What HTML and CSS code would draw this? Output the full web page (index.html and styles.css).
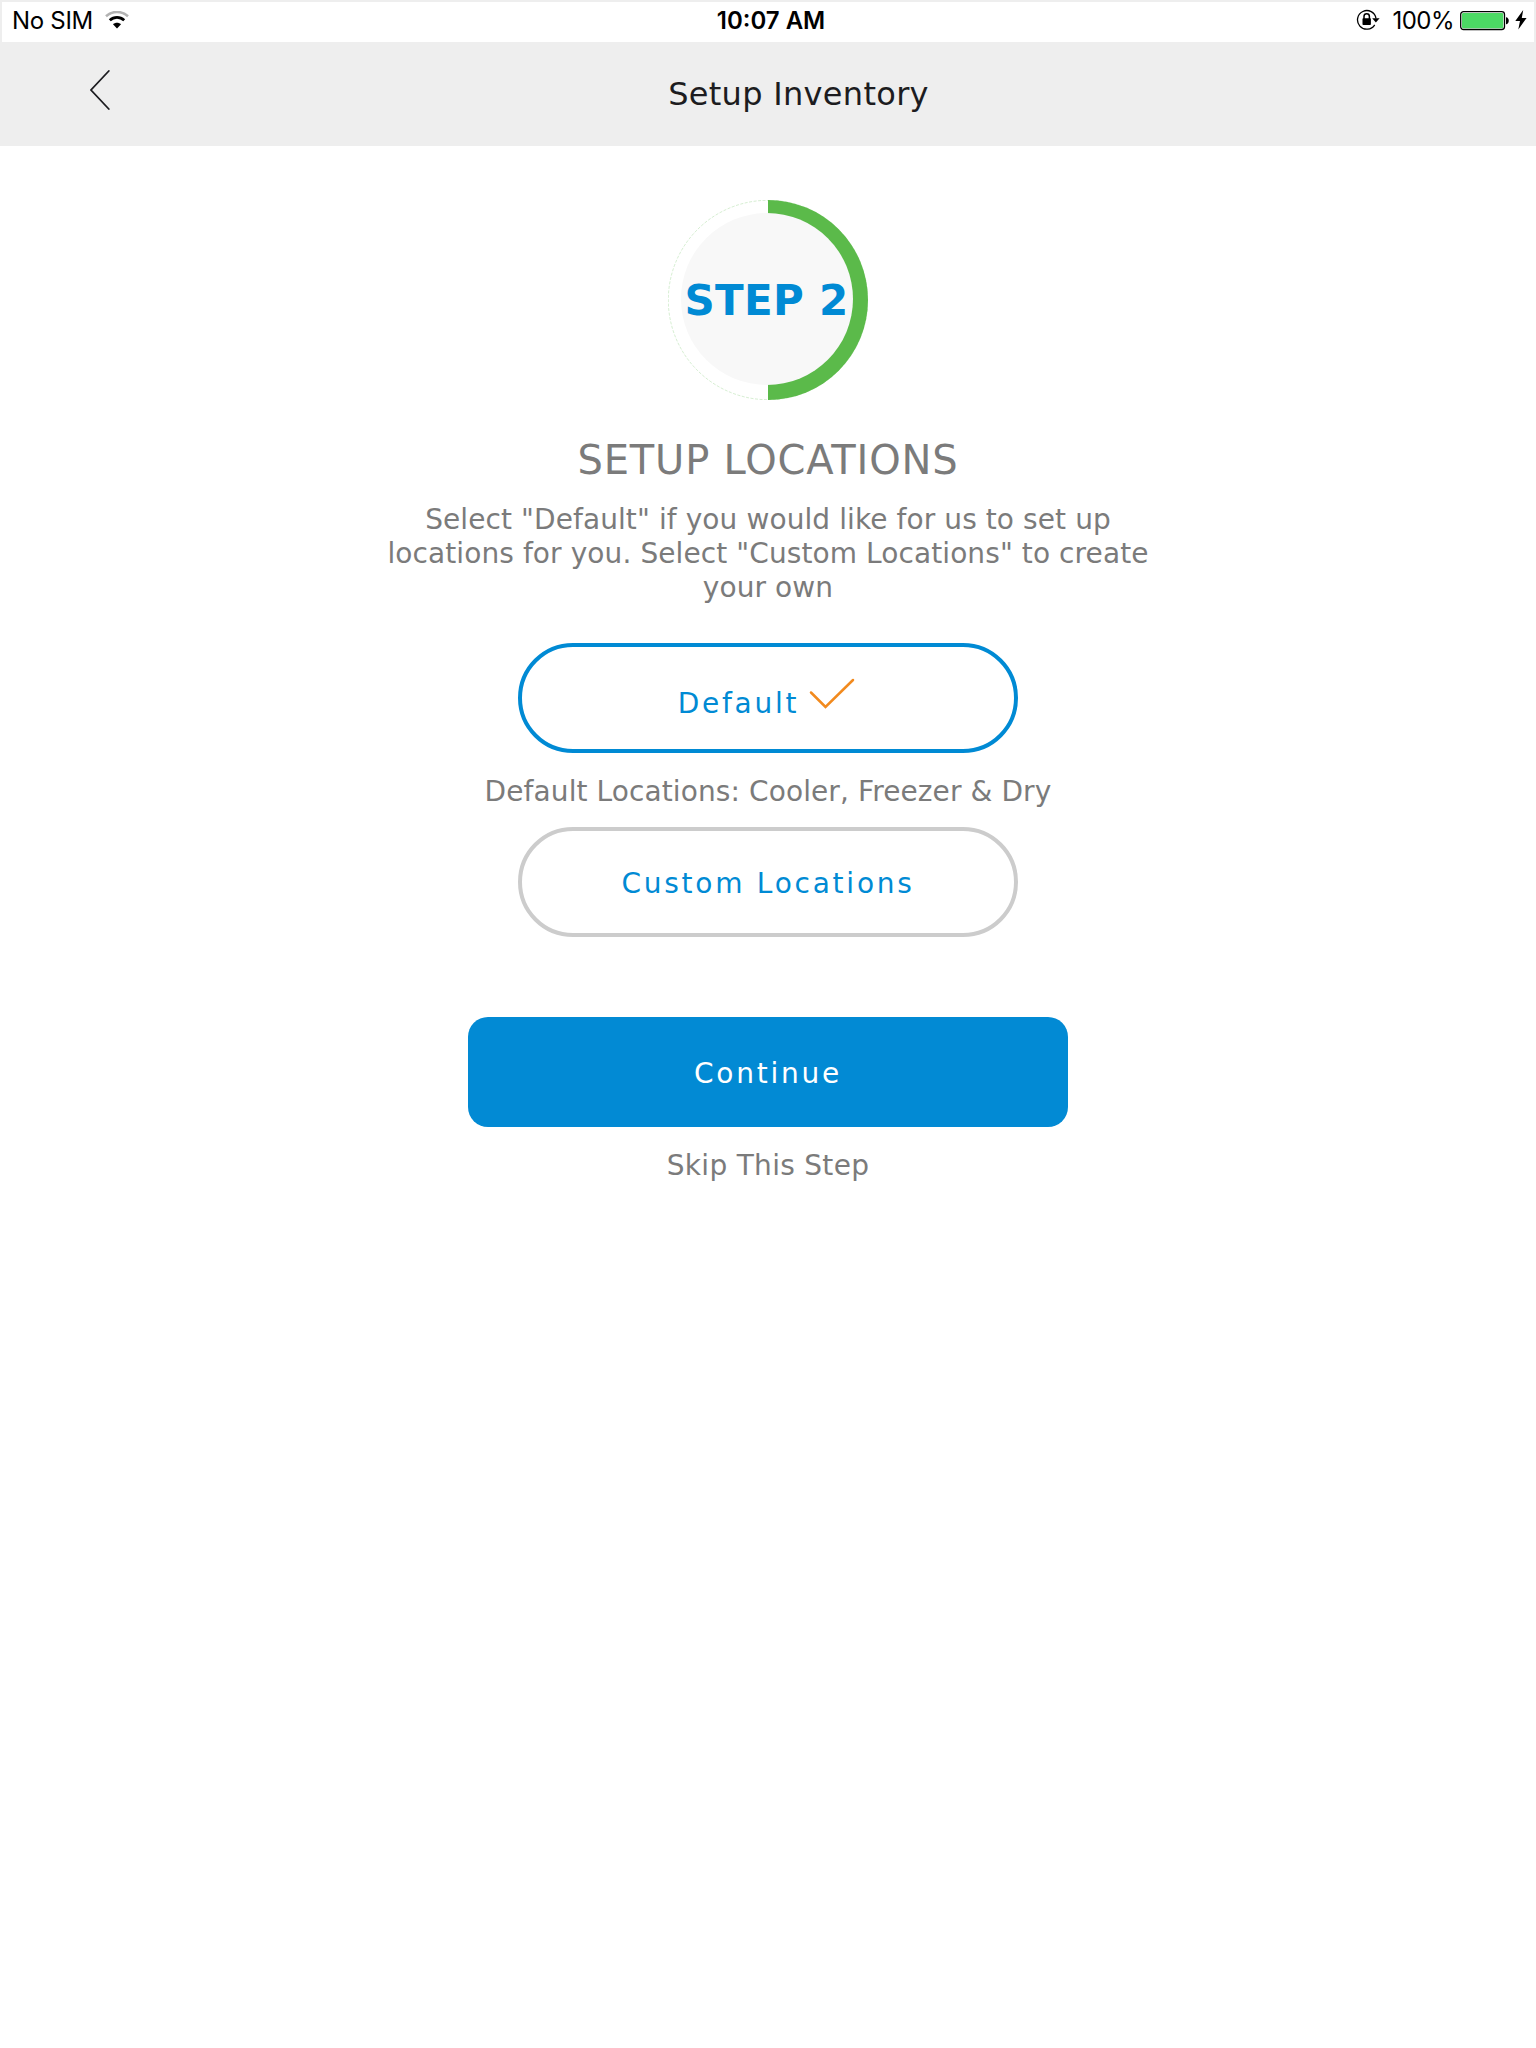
FILE: index.html
```html
<!DOCTYPE html>
<html lang="en">
<head>
<meta charset="utf-8">
<title>Setup Inventory</title>
<link rel="stylesheet" href="styles.css">
</head>
<body>
<div class="status-bar">
  <div class="status-left">
    <span class="carrier">No SIM</span>
    <svg class="wifi" width="24" height="18" viewBox="0 0 24 18" fill="none">
      <path d="M1 5.2C7.300-.4 16.700-.4 23 5.200" stroke="#b3b3b3" stroke-width="2.600"/>
      <path d="M4.800 9.200C9 5.300 15 5.300 19.200 9.200" stroke="#000" stroke-width="2.800"/>
      <path d="M8 13.200C10.300 11.200 13.700 11.200 16 13.200L12 17.500Z" fill="#000"/>
    </svg>
  </div>
  <div class="clock">10:07 AM</div>
  <div class="status-right">
    <svg class="lock" width="24" height="22" viewBox="0 0 24 22" fill="none">
      <path d="M18.700 15.800A9.300 9.300 0 1 1 20 9.500" stroke="#000" stroke-width="1.300"/>
      <path d="M16.200 9.300H23.600L19.900 13.500Z" fill="#000"/>
      <rect x="6.500" y="9.300" width="8.400" height="6.700" rx=".8" fill="#000"/>
      <path d="M8 10V7.500a2.700 2.700 0 0 1 5.400 0V10" stroke="#000" stroke-width="1.500"/>
    </svg>
    <span class="percent">100%</span>
    <svg class="battery" width="50" height="20" viewBox="0 0 50 20">
      <rect x=".7" y=".7" width="43.800" height="17.800" rx="2.800" fill="#fff" stroke="#000" stroke-width="1.300"/>
      <rect x="2" y="2" width="41.200" height="15.200" rx="1.200" fill="#4cd964"/>
      <path d="M46 6.200C49.700 6.400 49.700 13 46 13.200Z" fill="#000"/>
    </svg>
    <svg class="bolt" width="12" height="20" viewBox="0 0 12 20">
      <path d="M8.200 0L.3 11H5L3.300 19.500L11.600 8H6.800Z" fill="#000"/>
    </svg>
  </div>
</div>

<header class="nav-bar">
  <svg class="back" width="20" height="40" viewBox="0 0 20 40" fill="none">
    <path d="M18.800 1L1 20L18.800 39" stroke="#1c1c20" stroke-width="1.800" stroke-linecap="round"/>
  </svg>
  <h1 class="title">Setup Inventory</h1>
</header>

<main class="content">
  <div class="step">
    <svg class="ring" width="200" height="200" viewBox="0 0 200 200">
      <circle cx="100" cy="100" r="99.700" fill="#fff" stroke="#5bba4a" stroke-width=".5" stroke-opacity=".5" stroke-dasharray="3 1.500"/>
      <path d="M100 0A100 100 0 0 1 100 200Z" fill="#5bba4a"/>
      <circle cx="99" cy="99" r="86" fill="#f8f8f8"/>
    </svg>
    <span class="step-label">STEP 2</span>
  </div>
  <h2 class="heading">SETUP LOCATIONS</h2>
  <p class="intro">Select "Default" if you would like for us to set up<br>locations for you. Select "Custom Locations" to create<br>your own</p>
  <div class="option selected">
    <span>Default</span>
    <svg class="check" width="46" height="32" viewBox="0 0 46 32" fill="none">
      <path d="M2 14.500L16.500 29L44 2" stroke="#f28a1e" stroke-width="2.500" stroke-linecap="round"/>
    </svg>
  </div>
  <p class="caption">Default Locations: Cooler, Freezer &amp; Dry</p>
  <div class="option custom">Custom Locations</div>
  <div class="continue">Continue</div>
  <div class="skip">Skip This Step</div>
</main>
</body>
</html>
```
FILE: styles.css
```css
* {
  box-sizing: border-box;
}

body {
  margin: 0;
  min-height: 2048px;
  background: #fff;
  color: #7b7b7b;
  font-family: "DejaVu Sans", sans-serif;
  font-size: 28px;
}

h1, h2, p {
  margin: 0;
  font-weight: 400;
}

.status-bar {
  display: grid;
  grid-template-columns: 1fr auto 1fr;
  height: 42px;
  border: 2px solid #eee;
  border-bottom: 0;
  color: #000;
  font-family: Inter, sans-serif;
  font-size: 24px;
  line-height: 38px;
}

.status-left, .status-right {
  display: flex;
  align-items: flex-start;
}

.status-left {
  padding-left: 10px;
}

.carrier {
  letter-spacing: -0.3px;
}

.wifi {
  margin: 9px 0 0 12px;
}

.clock {
  padding-left: 6px;
  font-weight: 600;
}

.status-right {
  justify-content: flex-end;
  padding-right: 7px;
}

.lock {
  margin: 7px 12px 0 0;
}

.percent {
  letter-spacing: -0.5px;
}

.battery {
  margin: 9px 5px 0 6px;
}

.bolt {
  margin-top: 8px;
}

.nav-bar {
  display: flex;
  height: 104px;
  background: #eee;
}

.back {
  flex: none;
  margin: 28px -49px 0 90px;
}

.title {
  flex: 1;
  color: #1c1c20;
  font-size: 32px;
  line-height: 104px;
  letter-spacing: 0.3px;
  text-align: center;
}

.content {
  display: flex;
  flex-direction: column;
  align-items: center;
  padding-top: 54px;
  text-align: center;
}

.step {
  display: grid;
  place-items: center;
  width: 200px;
  height: 200px;
}

.ring, .step-label {
  grid-area: 1 / 1;
}

.step-label {
  margin-left: -3px;
  color: #008ad4;
  font-size: 42px;
  font-weight: 700;
  letter-spacing: 0.3px;
  white-space: nowrap;
}

.heading {
  margin-top: 35px;
  font-size: 40px;
  line-height: 50px;
  letter-spacing: 0.8px;
}

.intro {
  margin-top: 18px;
  line-height: 34px;
  letter-spacing: 0.09px;
}

.option {
  display: flex;
  justify-content: center;
  align-items: center;
  width: 500px;
  height: 110px;
  border: 4px solid #ccc;
  border-radius: 55px;
  color: #008ad4;
  letter-spacing: 2.75px;
}

.selected {
  margin-top: 38px;
  padding: 10px 3px 0 0;
  border-color: #008ad4;
}

.check {
  margin: -18px 0 0 10px;
}

.caption {
  padding-top: 4px;
  line-height: 70px;
  letter-spacing: 0.1px;
}

.custom {
  padding-top: 2px;
}

.continue {
  width: 600px;
  height: 110px;
  margin-top: 80px;
  padding-top: 4px;
  border-radius: 20px;
  background: #028ad4;
  color: #fff;
  line-height: 106px;
  letter-spacing: 2.75px;
}

.skip {
  padding-top: 1px;
  line-height: 76px;
  letter-spacing: 0.3px;
}
```
